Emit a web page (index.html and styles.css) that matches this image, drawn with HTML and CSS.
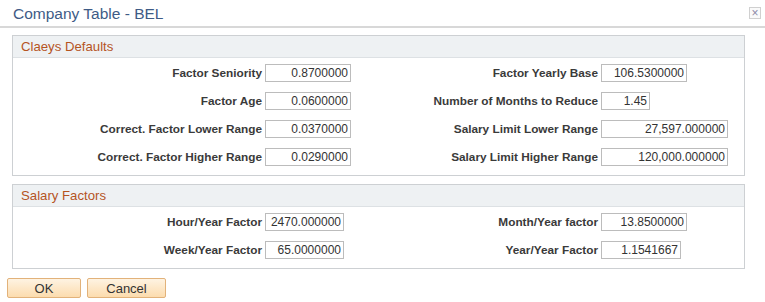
FILE: index.html
```html
<!DOCTYPE html>
<html lang="en">
<head>
    <meta charset="UTF-8">
    <title>Company Table - BEL</title>
    <link rel="stylesheet" href="styles.css">
</head>
<body>
    <div class="titlebar">
        <h1>Company Table - BEL</h1>
        <button class="close" title="Close">&times;</button>
    </div>

    <div class="content">
        <section class="group">
            <h2 class="group-title">Claeys Defaults</h2>
            <div class="fields">
                <label>Factor Seniority</label>
                <input type="text" class="w85" value="0.8700000">
                <label>Factor Yearly Base</label>
                <input type="text" class="w85" value="106.5300000">

                <label>Factor Age</label>
                <input type="text" class="w85" value="0.0600000">
                <label>Number of Months to Reduce</label>
                <input type="text" class="w48" value="1.45">

                <label>Correct. Factor Lower Range</label>
                <input type="text" class="w85" value="0.0370000">
                <label>Salary Limit Lower Range</label>
                <input type="text" class="w126" value="27,597.000000">

                <label>Correct. Factor Higher Range</label>
                <input type="text" class="w85" value="0.0290000">
                <label>Salary Limit Higher Range</label>
                <input type="text" class="w126" value="120,000.000000">
            </div>
        </section>

        <section class="group">
            <h2 class="group-title">Salary Factors</h2>
            <div class="fields">
                <label>Hour/Year Factor</label>
                <input type="text" class="w78" value="2470.000000">
                <label>Month/Year factor</label>
                <input type="text" class="w85" value="13.8500000">

                <label>Week/Year Factor</label>
                <input type="text" class="w78" value="65.0000000">
                <label>Year/Year Factor</label>
                <input type="text" class="w79" value="1.1541667">
            </div>
        </section>

        <div class="actions">
            <button class="btn btn-ok">OK</button>
            <button class="btn btn-cancel">Cancel</button>
        </div>
    </div>
</body>
</html>
```

FILE: styles.css
```css
body {
    margin: 0;
    font-family: Arial, "Liberation Sans", sans-serif;
    background: #ffffff;
    color: #333;
}
.titlebar {
    display: flex;
    align-items: flex-start;
    justify-content: space-between;
    height: 26px;
    border-bottom: 2px solid #d8d8d8;
}
.titlebar h1 {
    margin: 5px 0 0 13px;
    font-size: 15.5px;
    font-weight: normal;
    color: #3e5b86;
    line-height: 18px;
}
.close {
    margin: 7px 4px 0 0;
    width: 12px;
    height: 12px;
    padding: 0;
    border: 1px solid #d0d0d0;
    background: #fafafa;
    color: #8d8aa8;
    font-size: 12px;
    line-height: 9px;
    font-family: Arial, "Liberation Sans", sans-serif;
}
.content {
    padding: 7px 0 0 12px;
}
.group {
    width: 731px;
    border: 1px solid #cdd0d3;
    margin-bottom: 8px;
}
.group-title {
    margin: 0;
    height: 21px;
    padding-left: 8px;
    background: #eef1f3;
    border-bottom: 1px solid #dde1e4;
    font-size: 13.2px;
    font-weight: normal;
    line-height: 21px;
    color: #b5541f;
}
.fields {
    display: grid;
    grid-template-columns: 249px 130px 200px auto;
    column-gap: 3px;
    row-gap: 10px;
    padding: 6px 0 9px 0;
    align-items: center;
}
.fields label {
    text-align: right;
    font-size: 11.8px;
    font-weight: bold;
    color: #3a3a3a;
}
.fields input {
    justify-self: start;
    box-sizing: border-box;
    height: 18px;
    margin: 0;
    padding: 0 2px;
    border: 1px solid #bcbcbc;
    text-align: right;
    font-family: Arial, "Liberation Sans", sans-serif;
    font-size: 12px;
    color: #333;
}
.w48 { width: 49px; }
.w78 { width: 79px; }
.w79 { width: 80px; }
.w85 { width: 86px; }
.w126 { width: 127px; }
.actions {
    display: flex;
    gap: 6px;
    margin: 9px 0 0 -5px;
}
.btn {
    height: 20px;
    padding: 0;
    border: 1px solid #e2b27a;
    border-radius: 2px;
    background: linear-gradient(#fef3e2, #fcdcae);
    font-family: Arial, "Liberation Sans", sans-serif;
    font-size: 13px;
    color: #333;
}
.btn-ok { width: 74px; }
.btn-cancel { width: 79px; }
```
